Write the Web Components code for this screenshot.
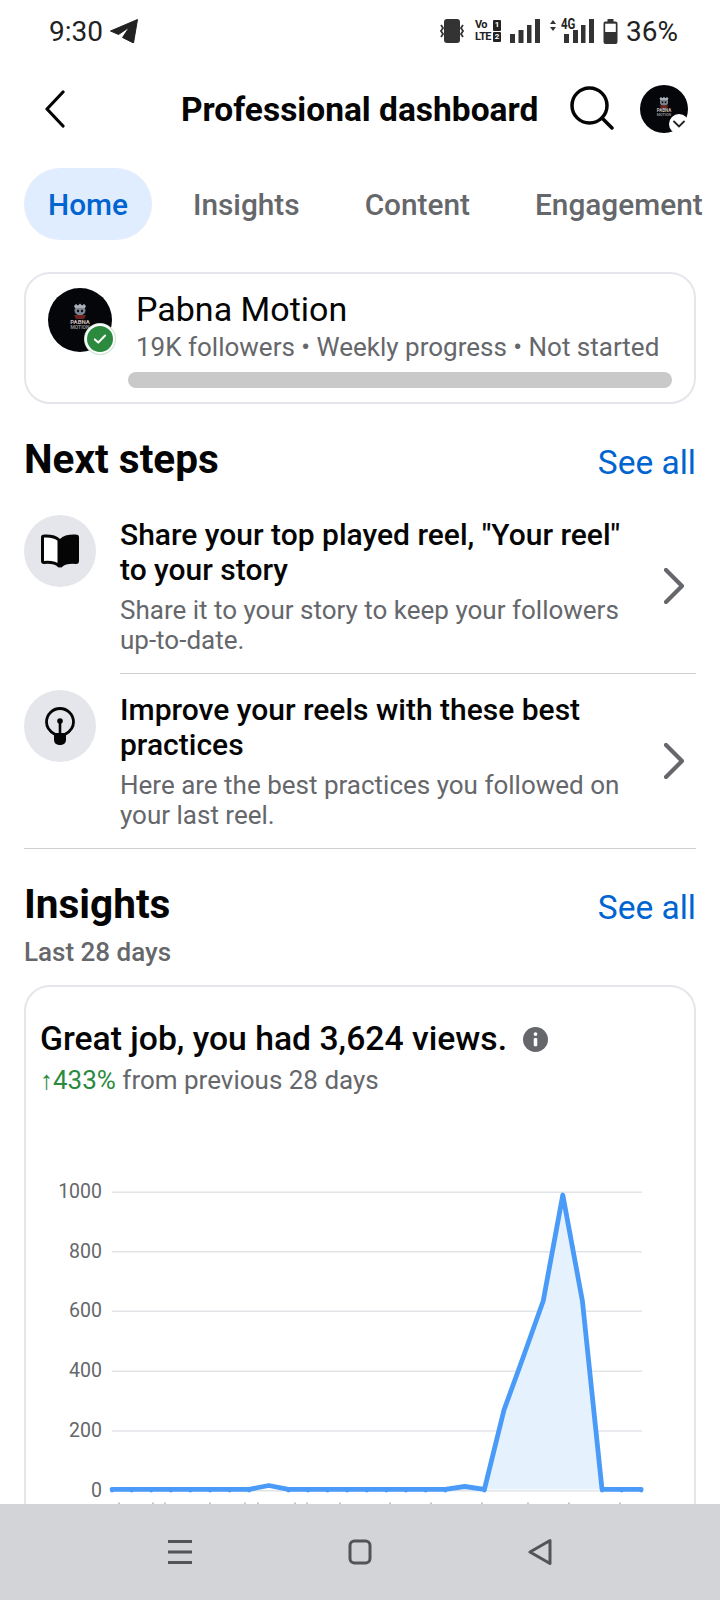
<!DOCTYPE html>
<html lang="en">
  <head>
    <meta charset="UTF-8" />
    <meta name="viewport" content="width=device-width, initial-scale=1.0" />
    <title>Professional dashboard</title>
    <style>
      html, body { margin: 0; padding: 0; background: #fff; }
      body { font-family: Roboto, "Liberation Sans", sans-serif; color: #050505; }
      main-screen { height: 1600px; width: 720px; }
    </style>
  </head>
  <body>
    <main-screen>
      <status-bar></status-bar>
      <top-bar></top-bar>
      <tab-row>
        <tab-item active>Home</tab-item>
        <tab-item>Insights</tab-item>
        <tab-item>Content</tab-item>
        <tab-item>Engagement</tab-item>
      </tab-row>
      <progress-card></progress-card>
      <section-head style="--top: 33px; --bottom: 34px;">Next steps</section-head>
      <step-item kind="book" heading='Share your top played reel, "Your reel" to your story' sub="Share it to your story to keep your followers up-to-date."></step-item>
      <step-item kind="bulb" last heading="Improve your reels with these best practices" sub="Here are the best practices you followed on your last reel."></step-item>
      <section-head style="--top: 33px; --bottom: 0px;">Insights</section-head>
      <views-card></views-card>
      <nav-bar slot="nav"></nav-bar>
    </main-screen>

    <script>
      const logo = (size) => `
        <svg width="${size}" height="${size}" viewBox="0 0 64 64" style="display:block">
          <circle cx="32" cy="32" r="32" fill="#05060a" />
          <ellipse cx="32" cy="22.500" rx="5.500" ry="5" fill="#7d8590" />
          <path d="M26 18l2-2 2 1.500 2-2 2 2 2-1.500 2 2-1 2h-10z" fill="#a9b0ba" />
          <circle cx="30" cy="23" r="1.200" fill="#111" /><circle cx="34" cy="23" r="1.200" fill="#111" />
          <path d="M26 27l12 0-2 4h-8z" fill="#6b2320" />
          <text x="32" y="36" text-anchor="middle" font-family="Roboto" font-weight="700" font-size="6" fill="#cdbdb6">PABNA</text>
          <text x="32" y="41" text-anchor="middle" font-family="Roboto" font-weight="700" font-size="5" fill="#8a8a8a">MOTION</text>
        </svg>`;

      class MainScreen extends HTMLElement {
        constructor() {
          super();
          const shadow = this.attachShadow({ mode: "open" });
          shadow.innerHTML = `
        <style>
          :host { display: flex; flex-direction: column; overflow: hidden; }
          .body { flex: 1; min-height: 0; overflow: hidden; }
        </style>
        <div class="body"><slot></slot></div>
        <slot name="nav"></slot>
      `;
        }
      }

      class StatusBar extends HTMLElement {
        constructor() {
          super();
          const shadow = this.attachShadow({ mode: "open" });
          shadow.innerHTML = `
        <style>
          :host { display: flex; align-items: center; height: 62px; padding: 0 42px 0 49px; color: #222; font-size: 28px; }
          .left, .right { display: flex; align-items: center; }
          .left { gap: 7px; flex: 1; }
          svg { display: block; flex: none; }
          .lte { font-size: 11px; font-weight: 700; line-height: 12px; letter-spacing: -0.6px; width: 17px; white-space: nowrap; }
          .lte2 { display: flex; align-items: center; gap: 1px; margin: 0 9px 0 10px; }
          .sim { display: flex; flex-direction: column; gap: 1px; }
          .sim span { width: 8px; height: 10.500px; background: #222; color: #fff; font-size: 8px; font-weight: 700; line-height: 10.500px; text-align: center; border-radius: 1px; }
          .g4 { position: relative; width: 44px; height: 24px; margin: 0 9px 0 10px; }
          .g4 b { position: absolute; left: 11px; top: -2px; font-size: 14px; line-height: 14px; font-weight: 700; transform: scaleX(.82); transform-origin: left center; }
          .pct { margin-left: 8px; }
        </style>
        <div class="left">
          <span>9:30</span>
          <svg width="28" height="24" viewBox="0 0 28 24"><path d="M0.500 12 27.500 0.500 23.500 24 12.500 18.500 19.500 8 8.500 15.500z" fill="#222" stroke="#222" stroke-linejoin="round" /></svg>
        </div>
        <div class="right">
          <svg width="26" height="24" viewBox="0 0 26 24">
            <rect x="5" y="0" width="16" height="24" rx="3" fill="#333" />
            <path d="M2 6l2 3-2 3 2 3-2 3M24 6l-2 3 2 3-2 3 2 3" fill="none" stroke="#333" stroke-width="1.800" />
          </svg>
          <div class="lte2">
            <div class="lte">Vo<br />LTE</div>
            <div class="sim"><span>1</span><span>2</span></div>
          </div>
          <svg width="30" height="24" viewBox="0 0 30 24">
            <rect x="0" y="15" width="5" height="9" fill="#333" /><rect x="8.500" y="11" width="5" height="13" fill="#333" />
            <rect x="17" y="6" width="4.500" height="18" fill="#333" /><rect x="25" y="0" width="5" height="24" fill="#333" />
          </svg>
          <div class="g4">
            <svg width="44" height="24" viewBox="0 0 44 24" style="position:absolute;left:0;top:0">
              <path d="M0 5l3-4 3 4zM0 8l3 4 3-4z" fill="#333" />
              <rect x="14" y="15" width="5" height="9" fill="#333" /><rect x="23" y="11" width="5" height="13" fill="#333" />
              <rect x="31" y="6" width="4.500" height="18" fill="#333" /><rect x="39" y="0" width="5" height="24" fill="#333" />
            </svg>
            <b>4G</b>
          </div>
          <svg width="15" height="25" viewBox="0 0 15 25">
            <path d="M4.500 0h6v2.500h2a2 2 0 0 1 2 2V23a2 2 0 0 1-2 2h-10a2 2 0 0 1-2-2V4.500a2 2 0 0 1 2-2h2z" fill="#333" />
            <rect x="2.200" y="4.700" width="10.600" height="8.300" fill="#fff" />
          </svg>
          <span class="pct">36%</span>
        </div>
      `;
        }
      }

      class TopBar extends HTMLElement {
        constructor() {
          super();
          const shadow = this.attachShadow({ mode: "open" });
          shadow.innerHTML = `
        <style>
          :host { display: flex; align-items: center; height: 90px; box-sizing: border-box; padding: 4px 32px 0 45px; }
          .back { width: 20px; height: 38px; display: block; }
          h1 { margin: 2px 0 0 116px; flex: 1; font-size: 33.500px; font-weight: 700; line-height: 40px; white-space: nowrap; }
          .search { display: block; margin: 0 26px 3px 0; }
          .me { position: relative; width: 48px; height: 48px; }
          .me i { position: absolute; right: -1px; bottom: -1px; width: 20px; height: 20px; border-radius: 50%; background: #fff; display: flex; align-items: center; justify-content: center; }
        </style>
        <svg class="back" viewBox="0 0 20 38"><path d="M18 2 2 19 18 36" fill="none" stroke="#050505" stroke-width="3.200" stroke-linecap="round" stroke-linejoin="round" /></svg>
        <h1>Professional dashboard</h1>
        <svg class="search" width="44" height="44" viewBox="0 0 44 44"><circle cx="19.500" cy="19.500" r="17.500" fill="none" stroke="#050505" stroke-width="3.500" /><path d="M32 32 42 42" stroke="#050505" stroke-width="3.500" stroke-linecap="round" /></svg>
        <div class="me">${logo(48)}<i><svg width="12" height="8" viewBox="0 0 12 8"><path d="M1 1.500 6 6.500 11 1.500" fill="none" stroke="#222" stroke-width="1.800" stroke-linecap="round" /></svg></i></div>
      `;
        }
      }

      class TabRow extends HTMLElement {
        constructor() {
          super();
          const shadow = this.attachShadow({ mode: "open" });
          shadow.innerHTML = `
        <style>
          :host { display: flex; gap: 17px; padding: 16px 0 0 24px; white-space: nowrap; overflow: hidden; }
        </style>
        <slot></slot>
      `;
        }
      }

      class TabItem extends HTMLElement {
        constructor() {
          super();
          const shadow = this.attachShadow({ mode: "open" });
          shadow.innerHTML = `
        <style>
          :host { display: block; height: 72px; line-height: 74px; padding: 0 24px; border-radius: 36px; font-size: 29.800px; font-weight: 500; color: #65676b; }
          :host([active]) { background: #e0edff; color: #0064d1; }
        </style>
        <slot></slot>
      `;
        }
      }

      class ProgressCard extends HTMLElement {
        constructor() {
          super();
          const shadow = this.attachShadow({ mode: "open" });
          shadow.innerHTML = `
        <style>
          :host { display: flex; margin: 32px 24px 0; height: 132px; box-sizing: border-box; border: 2px solid #e4e6eb; border-radius: 26px; padding: 14px 22px 0 22px; }
          .pic { position: relative; width: 64px; height: 64px; flex: none; }
          .pic i { position: absolute; left: 37px; top: 36px; width: 26px; height: 26px; border-radius: 50%; background: #2b8a3e; border: 2px solid #fff; box-shadow: 0 0 0 1px #c9e4cf; display: flex; align-items: center; justify-content: center; box-sizing: content-box; }
          .txt { flex: 1; margin-left: 24px; min-width: 0; }
          .name { font-size: 34px; line-height: 42px; }
          .meta { font-size: 26px; line-height: 32px; color: #65676b; white-space: nowrap; margin-top: 1px; }
          .bar { height: 16px; border-radius: 8px; background: #c9c9c9; margin: 9px 0 0 -8px; }
        </style>
        <div class="pic">${logo(64)}
          <i><svg width="14" height="12" viewBox="0 0 16 14"><path d="M2 7.500 6 11 14 3" fill="none" stroke="#fff" stroke-width="2.400" stroke-linecap="round" stroke-linejoin="round" /></svg></i>
        </div>
        <div class="txt">
          <div class="name">Pabna Motion</div>
          <div class="meta">19K followers • Weekly progress • Not started</div>
          <div class="bar"></div>
        </div>
      `;
        }
      }

      class SectionHead extends HTMLElement {
        constructor() {
          super();
          const shadow = this.attachShadow({ mode: "open" });
          shadow.innerHTML = `
        <style>
          :host { display: flex; align-items: flex-end; justify-content: space-between; margin: var(--top) 24px var(--bottom); }
          h2 { margin: 0; font-size: 40.500px; line-height: 44px; font-weight: 700; }
          a { font-size: 33.500px; line-height: 36px; color: #0064d1; }
        </style>
        <h2><slot></slot></h2>
        <a>See all</a>
      `;
        }
      }

      class StepItem extends HTMLElement {
        constructor() {
          super();
          const shadow = this.attachShadow({ mode: "open" });
          const book = `<svg width="38" height="34" viewBox="0 0 38 34">
            <path d="M18 6C15 3 9 1.700 3 2 2 2 1.500 2.600 1.500 3.500V27c0 1 .6 1.500 1.500 1.500C9 28 15 29 18 32z" fill="#fff" stroke="#050505" stroke-width="3" stroke-linejoin="round" />
            <path d="M20 6C23 3 29 1.700 35 2c1 0 1.500.6 1.500 1.500V27c0 1-.6 1.500-1.500 1.500C29 28 23 29 20 32z" fill="#050505" stroke="#050505" stroke-width="3" stroke-linejoin="round" />
          </svg>`;
          const bulb = `<svg width="30" height="38" viewBox="0 0 30 38">
            <path d="M9.500 27C5 24.500 1.500 20.500 1.500 15a13.500 13.500 0 0 1 27 0c0 5.500-3.500 9.500-8 12" fill="none" stroke="#050505" stroke-width="2.800" stroke-linecap="round" />
            <path d="M15 14v14" stroke="#050505" stroke-width="2.600" />
            <circle cx="15" cy="14" r="2.800" fill="#050505" />
            <path d="M9 26h12v7a5 5 0 0 1-5 5h-2a5 5 0 0 1-5-5z" fill="#050505" />
          </svg>`;
          shadow.innerHTML = `
        <style>
          :host { display: flex; gap: 24px; margin-left: 24px; }
          .ic { flex: none; width: 72px; height: 72px; border-radius: 50%; background: #e4e6eb; display: flex; align-items: center; justify-content: center; }
          .col { flex: 1; display: flex; align-items: center; border-bottom: 1px solid #ced0d4; padding: 0 0 18px; margin-right: 24px; min-width: 0; }
          :host([last]) { display: grid; grid-template-columns: 72px 1fr; column-gap: 24px; margin: 16px 24px 0; border-bottom: 1px solid #ced0d4; padding-bottom: 18px; }
          :host([last]) .col { border: 0; padding: 0; margin: 0; }
          .t { flex: 1; min-width: 0; }
          .h { font-size: 30px; line-height: 35px; font-weight: 500; margin-top: 2px; }
          .s { font-size: 26px; line-height: 30px; color: #65676b; margin-top: 8px; }
          .go { flex: none; display: block; margin: 1px 12px 0 22px; }
        </style>
        <div class="ic">${this.getAttribute("kind") === "book" ? book : bulb}</div>
        <div class="col">
          <div class="t">
            <div class="h">${this.getAttribute("heading")}</div>
            <div class="s">${this.getAttribute("sub")}</div>
          </div>
          <svg class="go" width="20" height="36" viewBox="0 0 20 36"><path d="M2 2 18 18 2 34" fill="none" stroke="#65676b" stroke-width="4.200" stroke-linecap="round" stroke-linejoin="round" /></svg>
        </div>
      `;
        }
      }

      class ViewsCard extends HTMLElement {
        constructor() {
          super();
          const shadow = this.attachShadow({ mode: "open" });
          shadow.innerHTML = `
        <style>
          :host { display: block; }
          .sub { margin: 0 24px; font-size: 26px; line-height: 32px; font-weight: 500; color: #65676b; padding-top: 10px; }
          .card { margin: 17px 24px 0; height: 700px; box-sizing: border-box; border: 2px solid #e4e6eb; border-radius: 26px; padding: 32px 14px 0; }
          .head { display: flex; align-items: center; gap: 16px; font-size: 33.700px; line-height: 40px; font-weight: 500; white-space: nowrap; }
          .head svg { display: block; }
          .delta { font-size: 26px; line-height: 32px; color: #65676b; margin-top: 5px; }
          .delta b { font-weight: 400; color: #2b8a3e; }
          .chart { display: block; margin: 4px 0 0 -40px; }
        </style>
        <div class="sub">Last 28 days</div>
        <div class="card">
          <div class="head">Great job, you had 3,624 views.
            <svg width="25" height="25" viewBox="0 0 24 24"><circle cx="12" cy="12" r="12" fill="#65676b" /><circle cx="12" cy="6.800" r="1.800" fill="#fff" /><rect x="10.300" y="10.500" width="3.400" height="8" rx="1" fill="#fff" /></svg>
          </div>
          <div class="delta"><b>↑433%</b> from previous 28 days</div>
          <svg class="chart" width="680" height="420" viewBox="0 1100 680 420"></svg>
        </div>
      `;
          this.drawChart(shadow.querySelector(".chart"));
        }

        // the svg viewBox uses page coordinates so the numbers read off the reference directly
        drawChart(svg) {
          const ys = [1490.7, 1431, 1371.3, 1311.3, 1251.7, 1192.3];
          const labels = ["0", "200", "400", "600", "800", "1000"];
          let out = "";
          ys.forEach((y, i) => {
            out += `<line x1="112" x2="642" y1="${y}" y2="${y}" stroke="#e2e4e8" stroke-width="1.400" />`;
            out += `<text x="102" y="${y + 6}" text-anchor="end" font-family="Roboto" font-size="19.500" fill="#65676b">${labels[i]}</text>`;
          });
          const vals = { 8: 1485.5, 18: 1486.5, 20: 1410, 21: 1356, 22: 1301, 23: 1195, 24: 1301 };
          const pts = [];
          for (let i = 0; i < 28; i++) {
            pts.push([112 + i * 19.6, vals[i] || 1489.3]);
          }
          const line = pts.map((p) => p[0].toFixed(1) + "," + p[1]).join(" ");
          out += `<polygon points="${pts.slice(19, 26).map((p) => p[0].toFixed(1) + "," + p[1]).join(" ")}" fill="#e6f1fe" />`;
          out += `<polyline points="${line}" fill="none" stroke="#4a9bf7" stroke-width="4.800" stroke-linejoin="round" stroke-linecap="round" />`;
          pts.forEach((p) => {
            if (p[1] > 1489) out += `<circle cx="${p[0].toFixed(1)}" cy="1490.4" r="2" fill="#4a9bf7" />`;
          });
          // tops of the axis labels that the nav bar covers
          [119, 153, 165, 210, 245, 258, 295, 307, 340, 390, 431, 482, 528, 569, 620].forEach((x) => {
            out += `<line x1="${x}" x2="${x}" y1="1502.500" y2="1504" stroke="#c4c6ca" stroke-width="2" />`;
          });
          svg.innerHTML = out;
        }
      }

      class NavBar extends HTMLElement {
        constructor() {
          super();
          const shadow = this.attachShadow({ mode: "open" });
          shadow.innerHTML = `
        <style>
          :host { display: flex; flex: none; height: 96px; background: #d3d4d8; align-items: center; justify-content: center; gap: 156px; padding-right: 1px; box-sizing: border-box; }
          svg { display: block; }
        </style>
        <svg width="24" height="24" viewBox="0 0 24 24"><path d="M0 1.500h24M0 12h24M0 22.500h24" stroke="#535457" stroke-width="3" /></svg>
        <svg width="24" height="26" viewBox="0 0 24 26"><rect x="2" y="2" width="20" height="22" rx="4.500" fill="none" stroke="#535457" stroke-width="3" /></svg>
        <svg width="24" height="28" viewBox="0 0 24 28"><path d="M22 2.500V25.500L2 14z" fill="none" stroke="#535457" stroke-width="3" stroke-linejoin="round" /></svg>
      `;
        }
      }

      customElements.define("main-screen", MainScreen);
      customElements.define("status-bar", StatusBar);
      customElements.define("top-bar", TopBar);
      customElements.define("tab-row", TabRow);
      customElements.define("tab-item", TabItem);
      customElements.define("progress-card", ProgressCard);
      customElements.define("section-head", SectionHead);
      customElements.define("step-item", StepItem);
      customElements.define("views-card", ViewsCard);
      customElements.define("nav-bar", NavBar);
    </script>
  </body>
</html>
